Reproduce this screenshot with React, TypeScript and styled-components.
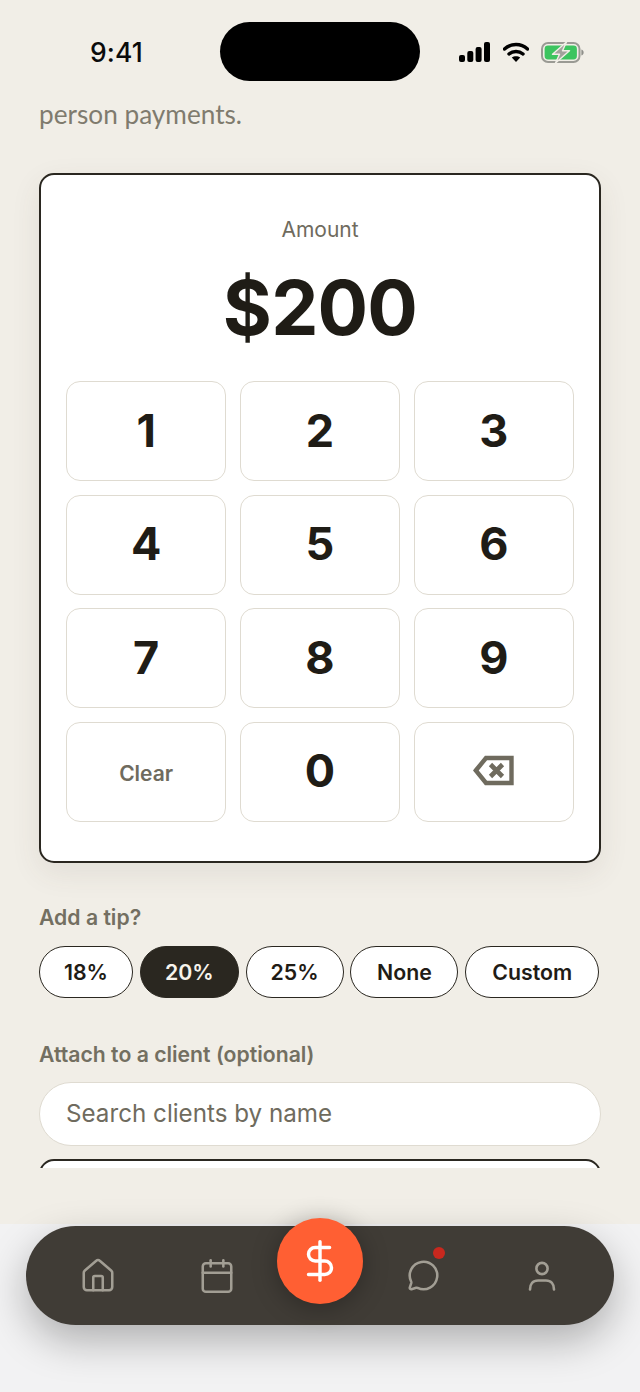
import React from "react";
import styled, { createGlobalStyle } from "styled-components";
import { House, Calendar, MessageCircle, DollarSign } from "lucide-react";

const Global = createGlobalStyle`
  html, body { margin: 0; padding: 0; background: #f1eee7; }
  * { box-sizing: border-box; }
`;

const Screen = styled.div`
  width: 640px;
  height: 1392px;
  display: flex;
  flex-direction: column;
  background: #f1eee7;
  font-family: Inter, "Liberation Sans", sans-serif;
  overflow: hidden;
`;

const StatusBar = styled.div`
  position: relative;
  flex: none;
  display: flex;
  align-items: center;
  justify-content: space-between;
  padding: 7px 56px 0 90px;
  height: 97px;
`;

const Time = styled.span`
  font-size: 26.5px;
  font-weight: 500;
  color: #0b0b0b;
  letter-spacing: 0.1px;
`;

const Island = styled.div`
  position: absolute;
  left: 220px;
  top: 22px;
  width: 200px;
  height: 59px;
  border-radius: 30px;
  background: #000;
`;

const StatusIcons = styled.div`
  display: flex;
  align-items: center;
  gap: 12.5px;
`;

const Scroller = styled.main`
  height: 1071px;
  flex: none;
  overflow: hidden;
  padding: 0 39px;
`;

const Intro = styled.p`
  margin: 0 0 42px;
  font-family: Lato, sans-serif;
  font-size: 26.2px;
  line-height: 34px;
  font-weight: 400;
  color: #7f7b6e;
`;

const Card = styled.section`
  background: #fff;
  border: 2px solid #2a2720;
  border-radius: 15px;
  padding: 37px 25px 39px;
  box-shadow: 0 10px 30px rgba(80, 70, 50, 0.09);
`;

const AmountLabel = styled.div`
  font-size: 21px;
  line-height: 36px;
  text-align: center;
  color: #6f6b5e;
`;

const AmountValue = styled.div`
  font-size: 75px;
  line-height: 88px;
  font-weight: 700;
  text-align: center;
  color: #1f1c16;
  margin: 16px 0 29px;
  letter-spacing: -0.8px;
`;

const Keypad = styled.div`
  display: grid;
  grid-template-columns: repeat(3, 1fr);
  grid-auto-rows: 100px;
  gap: 13.6px;
`;

const Key = styled.button<{ $muted?: boolean }>`
  border: 1px solid #dfdbd1;
  border-radius: 14px;
  background: #fff;
  padding: ${(p) => (p.$muted ? "3px 0 0" : "0 0 2px")};
  display: flex;
  align-items: center;
  justify-content: center;
  font-family: inherit;
  font-size: ${(p) => (p.$muted ? "21px" : "45px")};
  font-weight: ${(p) => (p.$muted ? 600 : 700)};
  color: ${(p) => (p.$muted ? "#6f6b5e" : "#1f1c16")};
`;

const FieldLabel = styled.div<{ $top: number }>`
  margin-top: ${(p) => p.$top}px;
  font-size: 21.2px;
  line-height: 28px;
  font-weight: 600;
  color: #736f61;
`;

const Pills = styled.div`
  display: flex;
  gap: 6.8px;
  margin-top: 15px;
`;

const Pill = styled.button<{ $width: number; $active?: boolean }>`
  width: ${(p) => p.$width}px;
  height: 52px;
  padding: 0;
  border-radius: 26px;
  border: 1px solid #2a2720;
  background: ${(p) => (p.$active ? "#2a2720" : "#fff")};
  color: ${(p) => (p.$active ? "#f6f3ec" : "#1f1c16")};
  font-family: inherit;
  font-size: 21.3px;
  font-weight: 600;
`;

const Search = styled.div`
  margin-top: 14px;
  height: 64px;
  border-radius: 32px;
  border: 1px solid #dfdbd1;
  background: #fff;
  display: flex;
  align-items: center;
  padding: 0 26px;
  font-size: 24.2px;
  color: #6f6b5e;
`;

const NextCard = styled(Card)`
  margin-top: 13px;
  height: 120px;
  box-shadow: none;
`;

const Footer = styled.footer`
  flex: 1;
  display: flex;
  flex-direction: column;
  position: relative;
`;

const FooterGap = styled.div`
  height: 56px;
  flex: none;
`;

const FooterTray = styled.div`
  flex: 1;
  background: #f2f2f3;
  padding: 2px 26px 0;
`;

const Nav = styled.nav`
  position: relative;
  height: 99px;
  border-radius: 50px;
  background: #403c36;
  box-shadow: 0 16px 40px rgba(0, 0, 0, 0.28);
  padding: 0 56px;
  display: flex;
  align-items: center;
  justify-content: space-between;
  color: #a29e94;
`;

const NavItem = styled.div`
  position: relative;
  width: 32px;
  height: 32px;
  display: flex;
  align-items: center;
  justify-content: center;

  svg {
    flex: none;
  }
`;

const FabSlot = styled.div`
  width: 0;
  align-self: stretch;
  position: relative;
`;

const Fab = styled.div`
  position: absolute;
  left: -43px;
  top: -8px;
  width: 86px;
  height: 86px;
  border-radius: 50%;
  background: #ff5f33;
  color: #fff;
  display: flex;
  align-items: center;
  justify-content: center;
  box-shadow: 0 4px 26px rgba(0, 0, 0, 0.3);
`;

const Badge = styled.span`
  position: absolute;
  left: 26px;
  top: -13px;
  width: 12px;
  height: 12px;
  border-radius: 50%;
  background: #c8281e;
`;

const Signal = () => (
  <svg width="31" height="20" viewBox="0 0 31 20">
    <rect x="0" y="13" width="6" height="7" rx="2" fill="#000" />
    <rect x="8.3" y="9" width="6" height="11" rx="2" fill="#000" />
    <rect x="16.6" y="5" width="6" height="15" rx="2" fill="#000" />
    <rect x="25" y="0" width="6" height="20" rx="2" fill="#000" />
  </svg>
);

const Wifi = () => (
  <svg width="26" height="20" viewBox="0 0 26 20" fill="none">
    <path d="M1.5 7 C8 1 18 1 24.5 7" stroke="#000" strokeWidth="3.4" strokeLinecap="round" />
    <path d="M6 12 C10 8.6 16 8.6 20 12" stroke="#000" strokeWidth="3.4" strokeLinecap="round" />
    <path d="M13 20 L8.8 15.6 C11 13.8 15 13.8 17.2 15.6 Z" fill="#000" />
  </svg>
);

const Battery = () => (
  <svg width="43" height="21" viewBox="0 0 43 21" fill="none">
    <rect x="1" y="1" width="37.5" height="19" rx="6" stroke="#9a9a94" strokeWidth="2" />
    <rect x="3.6" y="3.6" width="32.3" height="13.8" rx="3.4" fill="#3cc45f" />
    <path d="M40.4 7.5 C42 8 42.6 9.2 42.6 10.5 C42.6 11.8 42 13 40.4 13.5 Z" fill="#8f8f8a" />
    <path d="M25.5 0 L11.5 12.2 H18.5 L14.5 21 L28.5 8.8 H21.5 Z" fill="#a2a29c" stroke="#f1eee7" strokeWidth="1.4" strokeLinejoin="round" />
  </svg>
);

const Backspace = () => (
  <svg width="41" height="31" viewBox="0 0 41 31" fill="none">
    <path d="M2.8 15.5 L13 3 H38.5 V28 H13 Z" stroke="#6f6b5e" strokeWidth="4.4" />
    <path d="M17.5 9.5 L29.5 21.5 M29.5 9.5 L17.5 21.5" stroke="#6f6b5e" strokeWidth="4.6" />
  </svg>
);

const Person = () => (
  <svg width="32" height="32" viewBox="0 0 32 32" fill="none" stroke="currentColor" strokeWidth="2.6" strokeLinecap="round">
    <circle cx="16" cy="8.5" r="5.6" />
    <path d="M4 29.5 C4 24 7 20.5 12 20.5 H20 C25 20.5 28 24 28 29.5" />
  </svg>
);

const digits = ["1", "2", "3", "4", "5", "6", "7", "8", "9"];
const tips: { label: string; width: number; active?: boolean }[] = [
  { label: "18%", width: 94 },
  { label: "20%", width: 99, active: true },
  { label: "25%", width: 98 },
  { label: "None", width: 108 },
  { label: "Custom", width: 134 },
];

export default function App() {
  return (
    <Screen>
      <Global />
      <StatusBar>
        <Time>9:41</Time>
        <Island />
        <StatusIcons>
          <Signal />
          <Wifi />
          <Battery />
        </StatusIcons>
      </StatusBar>
      <Scroller>
        <Intro>person payments.</Intro>
        <Card>
          <AmountLabel>Amount</AmountLabel>
          <AmountValue>$200</AmountValue>
          <Keypad>
            {digits.map((d) => (
              <Key key={d}>{d}</Key>
            ))}
            <Key $muted>Clear</Key>
            <Key>0</Key>
            <Key aria-label="Backspace">
              <Backspace />
            </Key>
          </Keypad>
        </Card>
        <FieldLabel $top={40}>Add a tip?</FieldLabel>
        <Pills>
          {tips.map((t) => (
            <Pill key={t.label} $width={t.width} $active={t.active}>
              {t.label}
            </Pill>
          ))}
        </Pills>
        <FieldLabel $top={42}>Attach to a client (optional)</FieldLabel>
        <Search>Search clients by name</Search>
        <NextCard />
      </Scroller>
      <Footer>
        <FooterGap />
        <FooterTray>
          <Nav>
            <NavItem>
              <House size={38} strokeWidth={1.6} />
            </NavItem>
            <NavItem>
              <Calendar size={38} strokeWidth={1.6} />
            </NavItem>
            <FabSlot>
              <Fab>
                <DollarSign size={46} strokeWidth={1.8} />
              </Fab>
            </FabSlot>
            <NavItem>
              <MessageCircle size={33} strokeWidth={1.85} />
              <Badge />
            </NavItem>
            <NavItem>
              <Person />
            </NavItem>
          </Nav>
        </FooterTray>
      </Footer>
    </Screen>
  );
}
